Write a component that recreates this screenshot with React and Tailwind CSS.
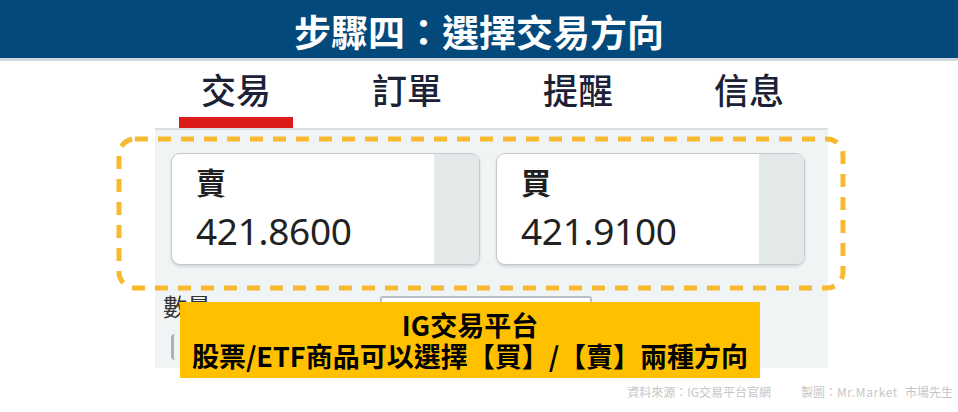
import React from "react";

const cjk = { fontFamily: '"Noto Sans CJK TC", "Noto Sans", sans-serif' };
const num = { fontFamily: '"Noto Sans", "Noto Sans CJK TC", sans-serif' };

function Card({ label, value }) {
  return (
    <div className="relative w-[309px] h-[112px] rounded-[9px] border-[1.5px] border-[#c3c9cc] bg-white shadow-[0_2px_3px_rgba(0,0,0,0.12)] overflow-hidden flex">
      <div className="flex-1 pl-[24px] pt-[12px] flex flex-col">
        <div className="text-[30px] leading-none font-bold text-[#1f1f1f]" style={cjk}>
          {label}
        </div>
        <div className="mt-[16px] text-[37px] leading-none tracking-[-0.3px] text-[#222222]" style={num}>
          {value}
        </div>
      </div>
      <div className="w-[45px] h-full bg-[#e3e9e9]" />
    </div>
  );
}

export default function App() {
  const tabs = ["交易", "訂單", "提醒", "信息"];
  return (
    <div className="relative w-[958px] h-[412px] bg-white overflow-hidden" style={cjk}>
      <div className="h-[58px] bg-[#03497b] flex items-center justify-center pt-[5px]">
        <span className="text-white text-[37px] leading-none font-bold">
          步驟四：選擇交易方向
        </span>
      </div>
      <div className="h-[3px] bg-[#cfd8e1]" />
      <div className="h-[67px] flex ml-[179px] gap-[57px]">
        {tabs.map((t, i) => (
          <div key={t} className="w-[114px] flex flex-col items-center pt-[10px]">
            <div className="text-[35px] leading-none font-medium text-[#1b2236]">{t}</div>
            <div className={"mt-[11px] h-[11px] w-full " + (i === 0 ? "bg-[#dc1b1b]" : "bg-transparent")} />
          </div>
        ))}
      </div>
      <div className="ml-[155px] w-[673px] h-[240px] bg-[#f1f4f5] border-t-2 border-[#d9dee1] flex flex-col">
        <div className="flex gap-[16px] pl-[16px] pt-[23px]">
          <Card label="賣" value="421.8600" />
          <Card label="買" value="421.9100" />
        </div>
        <div className="flex items-start pl-[8px] mt-[29px]">
          <div className="w-[217px] text-[24px] leading-none text-[#333333]">數量</div>
          <div className="mt-[2px] w-[212px] h-[30px] rounded-[3px] border-2 border-[#b7bfc5] bg-white" />
        </div>
        <div className="pl-[16px] mt-[8px]">
          <div className="w-[200px] h-[26px] rounded-[4px] border-l-[3px] border-[#a9b1b6] bg-[#f1f4f5]" />
        </div>
      </div>
      <div className="mt-[18px] pr-[5px] text-right text-[12px] leading-none text-[#c6c6c6]">
        資料來源：IG交易平台官網<span className="inline-block w-[30px]" />製圖：<span className="tracking-[0.6px]">Mr.Market</span><span className="inline-block w-[7px]" />市場先生
      </div>

      <svg className="absolute left-[116px] top-[136px]" width="730" height="155" viewBox="0 0 730 155">
        <rect x="3" y="3" width="724" height="149" rx="16" fill="none" stroke="#f6b930" strokeWidth="5" strokeDasharray="13 10" />
      </svg>

      <div className="absolute left-[180px] top-[302px] w-[580px] h-[76px] bg-[#ffc000] flex flex-col items-center justify-center font-bold text-black">
        <div className="text-[27px] leading-[31px]">IG交易平台</div>
        <div className="text-[27px] leading-[31px]">股票/ETF商品可以選擇【買】/【賣】兩種方向</div>
      </div>
    </div>
  );
}
